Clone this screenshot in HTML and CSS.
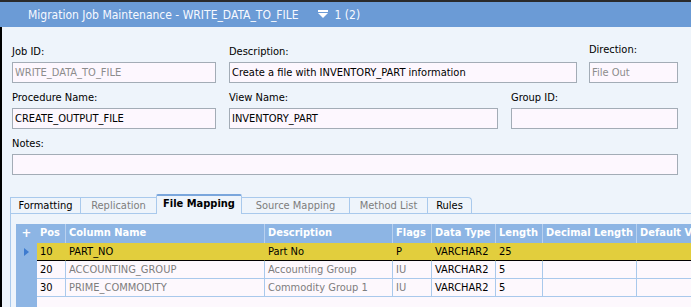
FILE: index.html
```html
<!DOCTYPE html>
<html lang="en">
<head>
    <meta charset="UTF-8">
    <title>Migration Job Maintenance</title>
    <link rel="stylesheet" href="styles.css">
</head>
<body>
<div class="window">
    <div class="titlebar">
        <span class="title">Migration Job Maintenance - WRITE_DATA_TO_FILE</span>
        <svg class="nav-icon" width="12" height="10" viewBox="0 0 12 10">
            <rect x="1" y="0" width="10" height="2" fill="#ffffff"/>
            <polygon points="1,3 11,3 6,8" fill="#ffffff"/>
        </svg>
        <span class="count">1 (2)</span>
    </div>

    <div class="content">
        <div class="form">
            <div class="form-row">
                <div class="field w-job">
                    <span class="label">Job ID:</span>
                    <div class="input disabled">WRITE_DATA_TO_FILE</div>
                </div>
                <div class="field w-desc">
                    <span class="label">Description:</span>
                    <div class="input">Create a file with INVENTORY_PART information</div>
                </div>
                <div class="field w-dir">
                    <span class="label">Direction:</span>
                    <div class="input disabled">File Out</div>
                </div>
            </div>
            <div class="form-row">
                <div class="field w-job">
                    <span class="label">Procedure Name:</span>
                    <div class="input">CREATE_OUTPUT_FILE</div>
                </div>
                <div class="field w-view">
                    <span class="label">View Name:</span>
                    <div class="input">INVENTORY_PART</div>
                </div>
                <div class="field w-group">
                    <span class="label">Group ID:</span>
                    <div class="input"></div>
                </div>
            </div>
            <div class="form-row">
                <div class="field w-notes">
                    <span class="label">Notes:</span>
                    <div class="input"></div>
                </div>
            </div>
        </div>

        <div class="tabs">
            <div class="tab t-format">Formatting</div>
            <div class="tab t-repl dim">Replication</div>
            <div class="tab t-file active">File Mapping</div>
            <div class="tab t-source dim">Source Mapping</div>
            <div class="tab t-method dim">Method List</div>
            <div class="tab t-rules last">Rules</div>
        </div>

        <div class="panel">
            <div class="grid">
                <div class="grid-row head">
                    <div class="cell sel">+</div>
                    <div class="cell">Pos</div>
                    <div class="cell">Column Name</div>
                    <div class="cell">Description</div>
                    <div class="cell">Flags</div>
                    <div class="cell">Data Type</div>
                    <div class="cell">Length</div>
                    <div class="cell">Decimal Length</div>
                    <div class="cell">Default Value</div>
                </div>
                <div class="grid-row current">
                    <div class="cell sel"><span class="arrow"></span></div>
                    <div class="cell">10</div>
                    <div class="cell">PART_NO</div>
                    <div class="cell">Part No</div>
                    <div class="cell">P</div>
                    <div class="cell">VARCHAR2</div>
                    <div class="cell">25</div>
                    <div class="cell"></div>
                    <div class="cell"></div>
                </div>
                <div class="grid-row">
                    <div class="cell sel"></div>
                    <div class="cell">20</div>
                    <div class="cell dim">ACCOUNTING_GROUP</div>
                    <div class="cell dim">Accounting Group</div>
                    <div class="cell dim">IU</div>
                    <div class="cell">VARCHAR2</div>
                    <div class="cell">5</div>
                    <div class="cell"></div>
                    <div class="cell"></div>
                </div>
                <div class="grid-row">
                    <div class="cell sel"></div>
                    <div class="cell">30</div>
                    <div class="cell dim">PRIME_COMMODITY</div>
                    <div class="cell dim">Commodity Group 1</div>
                    <div class="cell dim">IU</div>
                    <div class="cell">VARCHAR2</div>
                    <div class="cell">5</div>
                    <div class="cell"></div>
                    <div class="cell"></div>
                </div>
            </div>
        </div>
    </div>
</div>
</body>
</html>
```

FILE: styles.css
```css
/* janela principal */
body {
    margin: 0;
    font-family: "DejaVu Sans", "Liberation Sans", sans-serif;
    font-stretch: condensed;
    font-size: 11px;
    color: #000000;
    background-color: #eef4fb;
}
.window {
    width: 691px;
    height: 307px;
    overflow: hidden;
    display: flex;
    flex-direction: column;
    border-top: 2px solid #2a2a2a;
    box-sizing: border-box;
}
.titlebar {
    height: 25px;
    flex: none;
    display: flex;
    align-items: center;
    padding-left: 28px;
    background-color: #6b9bd6;
    color: #f7f9ff;
    font-size: 12px;
}
.nav-icon {
    margin-left: 18px;
    margin-right: 6px;
}
.content {
    flex: 1;
    display: flex;
    flex-direction: column;
    border-left: 2px solid #000000;
    min-height: 0;
}

/* formulario */
.form {
    padding: 17px 0 0 10px;
}
.form-row {
    display: flex;
    gap: 13px;
    margin-bottom: 7px;
}
.field {
    display: flex;
    flex-direction: column;
}
.label {
    line-height: 15px;
    margin-bottom: 3px;
}
.input {
    height: 21px;
    box-sizing: border-box;
    border: 1px solid #a3acb6;
    background-color: #fdf7fe;
    padding: 0 2px;
    line-height: 19px;
    white-space: nowrap;
    overflow: hidden;
}
.input.disabled {
    color: #8c8c8c;
}
.w-job { width: 204px; }
.w-desc { width: 348px; }
.w-dir { width: 89px; margin-left: -1px; }
.w-dir .label { margin-top: -2px; margin-bottom: 5px; }
.w-view { width: 269px; }
.w-group { width: 167px; }
.w-notes { width: 666px; }

/* abas */
.tabs {
    margin: 12px 0 0 8px;
    height: 19px;
    flex: none;
    display: flex;
    align-items: flex-end;
    border-bottom: 1px solid #a9c9ec;
}
.tab {
    height: 16px;
    box-sizing: border-box;
    border-top: 1px solid #a9c9ec;
    border-left: 1px solid #a9c9ec;
    line-height: 15px;
    text-align: center;
    white-space: nowrap;
}
.tab.dim { color: #7d7d7d; }
.tab.active {
    height: 20px;
    margin-bottom: -1px;
    border-top: 2px solid #7aa6dc;
    border-right: 1px solid #a9c9ec;
    border-radius: 2px 2px 0 0;
    background-color: #eef4fb;
    font-weight: bold;
    line-height: 16px;
}
.tab.active + .tab { border-left: none; }
.tab.last {
    border-right: 1px solid #a9c9ec;
    border-top-right-radius: 4px;
}
.t-format { width: 70px; }
.t-repl { width: 76px; }
.t-file { width: 86px; }
.t-source { width: 107px; }
.t-method { width: 78px; }
.t-rules { width: 45px; }

/* grade */
.panel {
    flex: 1;
    min-height: 0;
    margin-left: 8px;
    border-left: 1px solid #a9c9ec;
    padding: 10px 0 0 5px;
    display: flex;
}
.grid {
    flex: 1;
    overflow: hidden;
    background: linear-gradient(to right, #8db5e4 0 21px, #fdf8fd 21px);
}
.grid-row {
    display: grid;
    grid-template-columns: 21px 29px 199px 128px 39px 64px 47px 94px 120px;
    height: 18px;
}
.cell {
    box-sizing: border-box;
    padding-left: 3px;
    border-right: 1px solid #a9c9ec;
    border-bottom: 1px solid #a9c9ec;
    line-height: 17px;
    white-space: nowrap;
    overflow: hidden;
}
.cell.dim { color: #7d7d7d; }
.cell.sel {
    border: none;
    background-color: #8db5e4;
    padding: 0;
    text-align: center;
}
.grid-row.head {
    height: 19px;
}
.head .cell {
    background-color: #8db5e4;
    color: #ffffff;
    font-weight: bold;
    line-height: 18px;
    border-bottom: none;
    border-right-color: #b9d1ef;
}
.head .cell.sel {
    font-size: 13px;
}
.current .cell {
    background-color: #e2ce3d;
    border-right-color: #e2ce3d;
    border-bottom-color: #000000;
}
.current .cell.sel {
    background-color: #8db5e4;
}
.arrow {
    display: inline-block;
    margin-top: 5px;
    border-top: 4px solid transparent;
    border-bottom: 4px solid transparent;
    border-left: 5px solid #3d7bcf;
}
```
